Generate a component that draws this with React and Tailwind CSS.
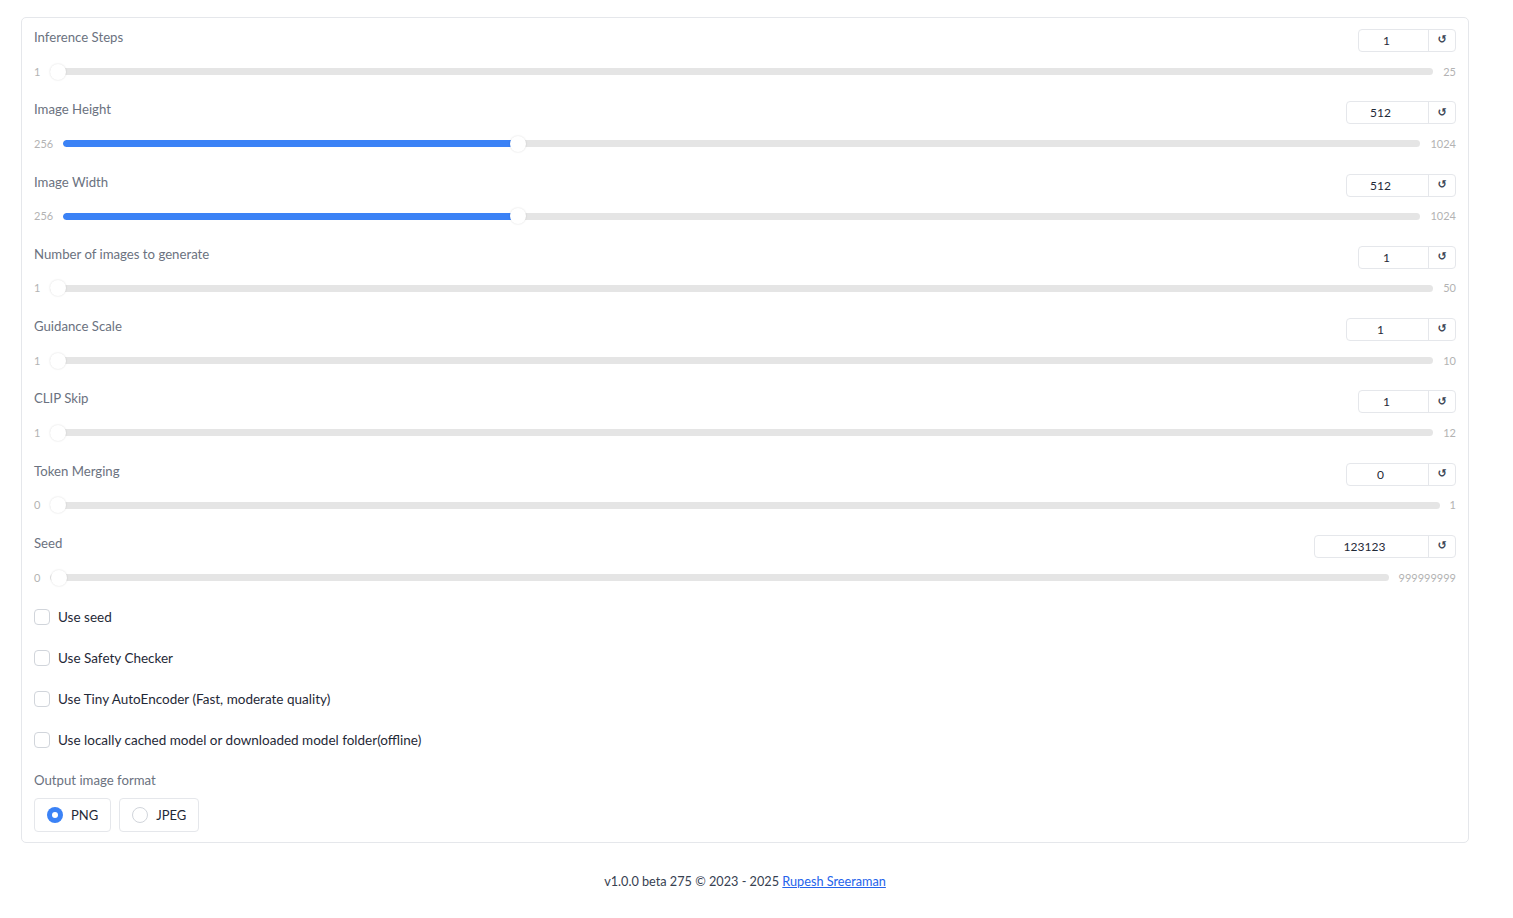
import React from 'react'

const sliders = [
  { label: 'Inference Steps', value: 1, min: 1, max: 25, w: 'w-[70px]' },
  { label: 'Image Height', value: 512, min: 256, max: 1024, w: 'w-[82px]' },
  { label: 'Image Width', value: 512, min: 256, max: 1024, w: 'w-[82px]' },
  { label: 'Number of images to generate', value: 1, min: 1, max: 50, w: 'w-[70px]' },
  { label: 'Guidance Scale', value: 1, min: 1, max: 10, w: 'w-[82px]' },
  { label: 'CLIP Skip', value: 1, min: 1, max: 12, w: 'w-[70px]' },
  { label: 'Token Merging', value: 0, min: 0, max: 1, w: 'w-[82px]' },
  { label: 'Seed', value: 123123, min: 0, max: 999999999, w: 'w-[114px]' },
]

const checks = [
  'Use seed',
  'Use Safety Checker',
  'Use Tiny AutoEncoder (Fast, moderate quality)',
  'Use locally cached model or downloaded model folder(offline)',
]

function SliderRow({ label, value, min, max, w }) {
  const pct = (value - min) / (max - min)
  return (
    <div className="h-[72.3px]">
      <div className="flex justify-between items-start h-[25px]">
        <span className="text-[13.2px] leading-5 text-[#6b7280]">{label}</span>
        <div className="flex mt-[2px] h-[23px] border border-[#e5e7eb] rounded-[4px] bg-white">
          <div className={`${w} flex items-center justify-center pr-[14px] pt-[1px] text-[12px] text-[#1f2937] border-r border-[#e5e7eb]`}>
            {value}
          </div>
          <button className="w-[26px] flex items-center justify-center text-[11px] font-bold text-[#374151]" style={{ fontFamily: '"DejaVu Sans", sans-serif' }}>
            ↺
          </button>
        </div>
      </div>
      <div className="flex items-center h-4 mt-[11.5px]">
        <span className="text-[11px] text-[#b3b3b3] leading-4">{min}</span>
        <div className="relative flex-1 h-4 mx-[10px] flex items-center">
          <div className="w-full h-[7px] rounded-full bg-[#e5e5e5] overflow-hidden">
            {pct > 0.01 && (
              <div className="h-full bg-[#3b82f6] rounded-full" style={{ width: `calc(${pct} * (100% - 16px) + 8px)` }} />
            )}
          </div>
          <div
            className="absolute top-0 w-4 h-4 rounded-full bg-white shadow-[0_0_2px_rgba(0,0,0,0.15)]"
            style={{ left: `calc(${pct} * (100% - 16px))` }}
          />
        </div>
        <span className="text-[11px] text-[#b3b3b3] leading-4">{max}</span>
      </div>
    </div>
  )
}

export default function App() {
  return (
    <div className="min-h-screen bg-white" style={{ fontFamily: 'Lato, "Noto Sans", sans-serif' }}>
      <div className="ml-[21px] w-[1448px] pt-[17px]">
        <div className="border border-[#e5e7eb] rounded-[5px] px-3 pt-[9px] pb-[10px]">
          {sliders.map((s) => (
            <SliderRow key={s.label} {...s} />
          ))}

          <div className="flex flex-col gap-[21px] mt-[2px]">
            {checks.map((c) => (
              <label key={c} className="flex items-center gap-2 h-5">
                <span className="w-4 h-4 rounded-[4px] border border-[#d1d5db] bg-white" />
                <span className="text-[13.5px] text-[#1f2937]">{c}</span>
              </label>
            ))}
          </div>

          <div className="mt-5 text-[13.2px] leading-5 text-[#6b7280]">Output image format</div>
          <div className="flex gap-2 mt-2">
            <div className="flex items-center gap-2 h-[34px] px-3 border border-[#e5e7eb] rounded-[4px]">
              <span className="w-4 h-4 rounded-full bg-[#3b82f6] flex items-center justify-center">
                <span className="w-[6px] h-[6px] rounded-full bg-white" />
              </span>
              <span className="text-[13px] text-[#1f2937]">PNG</span>
            </div>
            <div className="flex items-center gap-2 h-[34px] px-3 border border-[#e5e7eb] rounded-[4px]">
              <span className="w-4 h-4 rounded-full border border-[#d1d5db] bg-white" />
              <span className="text-[13px] text-[#1f2937]">JPEG</span>
            </div>
          </div>
        </div>

        <div className="mt-[28px] text-center text-[12.7px] leading-5 text-[#374151]">
          v1.0.0 beta 275 © 2023 - 2025{' '}
          <a href="#" className="text-[#2563eb] underline">Rupesh Sreeraman</a>
        </div>
      </div>
    </div>
  )
}
